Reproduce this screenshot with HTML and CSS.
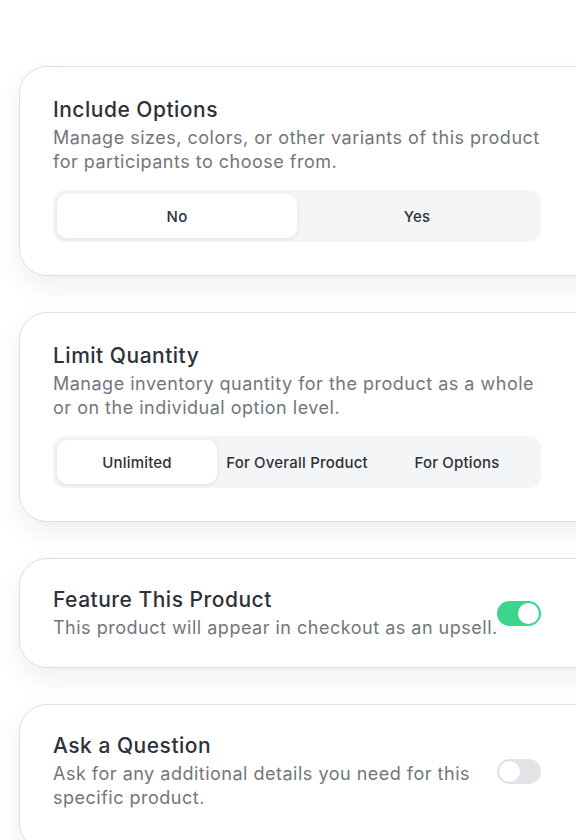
FILE: index.html
```html
<!DOCTYPE html>
<html lang="en">
<head>
<meta charset="utf-8">
<title>Product settings</title>
<link rel="stylesheet" href="styles.css">
</head>
<body>
<main class="stack">
  <section class="card">
    <h2 class="card-title">Include Options</h2>
    <p class="card-desc">Manage sizes, colors, or other variants of this product for participants to choose from.</p>
    <div class="segmented seg-2">
      <button class="seg-btn active">No</button>
      <button class="seg-btn">Yes</button>
    </div>
  </section>

  <section class="card">
    <h2 class="card-title">Limit Quantity</h2>
    <p class="card-desc">Manage inventory quantity for the product as a whole or on the individual option level.</p>
    <div class="segmented seg-3">
      <button class="seg-btn active">Unlimited</button>
      <button class="seg-btn">For Overall Product</button>
      <button class="seg-btn">For Options</button>
    </div>
  </section>

  <section class="card card-row">
    <div class="row-text">
      <h2 class="card-title">Feature This Product</h2>
      <p class="card-desc single-line">This product will appear in checkout as an upsell.</p>
    </div>
    <span class="toggle on"><span class="knob"></span></span>
  </section>

  <section class="card card-row card-last">
    <div class="row-text">
      <h2 class="card-title">Ask a Question</h2>
      <p class="card-desc">Ask for any additional details you need for this specific product.</p>
    </div>
    <span class="toggle"><span class="knob"></span></span>
  </section>
</main>
</body>
</html>
```

FILE: styles.css
```css
html, body {
  margin: 0;
  padding: 0;
  background: #ffffff;
  overflow: hidden;
}

body {
  font-family: Inter, "Noto Sans", "Liberation Sans", sans-serif;
  color: #2e3138;
}

.stack {
  display: flex;
  flex-direction: column;
  gap: 36px;
  padding: 66px 0 40px 19px;
  width: 620px;
}

.card {
  box-sizing: border-box;
  width: 620px;
  background: #ffffff;
  border: 1px solid #dedfe1;
  border-radius: 28px;
  padding: 29px 0 33px 33px;
  box-shadow: 0 10px 24px rgba(30, 35, 45, 0.07);
}

.card-title {
  margin: 0;
  font-size: 21px;
  line-height: 28px;
  font-weight: 500;
  letter-spacing: 0.5px;
  color: #2e3138;
}

.card-desc {
  margin: 2px 0 0;
  width: 488px;
  font-size: 18px;
  line-height: 24px;
  font-weight: 400;
  letter-spacing: 0.5px;
  color: #72767d;
}

.segmented {
  margin-top: 16px;
  width: 488px;
  box-sizing: border-box;
  height: 52px;
  padding: 4px;
  background: #f4f5f7;
  border-radius: 12px;
  display: grid;
  grid-auto-flow: column;
  grid-auto-columns: 1fr;
}

.seg-btn {
  font-family: inherit;
  font-size: 15px;
  font-weight: 500;
  letter-spacing: 0.2px;
  color: #2e3138;
  background: transparent;
  border: 0;
  border-radius: 10px;
  padding: 0;
  cursor: pointer;
}

.seg-btn.active {
  background: #ffffff;
  box-shadow: 0 1px 4px rgba(20, 25, 35, 0.10);
}

.card-row {
  display: flex;
  align-items: center;
  padding-top: 27px;
  padding-bottom: 27px;
}

.card-last {
  padding-bottom: 40px;
}

.row-text {
  width: 444px;
  flex: none;
}

.row-text .card-desc {
  width: auto;
}

.card-desc.single-line {
  white-space: nowrap;
}

.toggle {
  flex: none;
  position: relative;
  width: 44px;
  height: 25px;
  border-radius: 13px;
  background: #e3e4e7;
  box-sizing: border-box;
}

.toggle .knob {
  position: absolute;
  top: 1px;
  left: 1px;
  width: 23px;
  height: 23px;
  border-radius: 50%;
  background: #ffffff;
  box-sizing: border-box;
  border: 1px solid #dcdde0;
}

.toggle.on {
  background: #3bd58d;
}

.toggle.on .knob {
  left: auto;
  right: 2px;
  top: 2px;
  width: 21px;
  height: 21px;
  border: 0;
}
```
